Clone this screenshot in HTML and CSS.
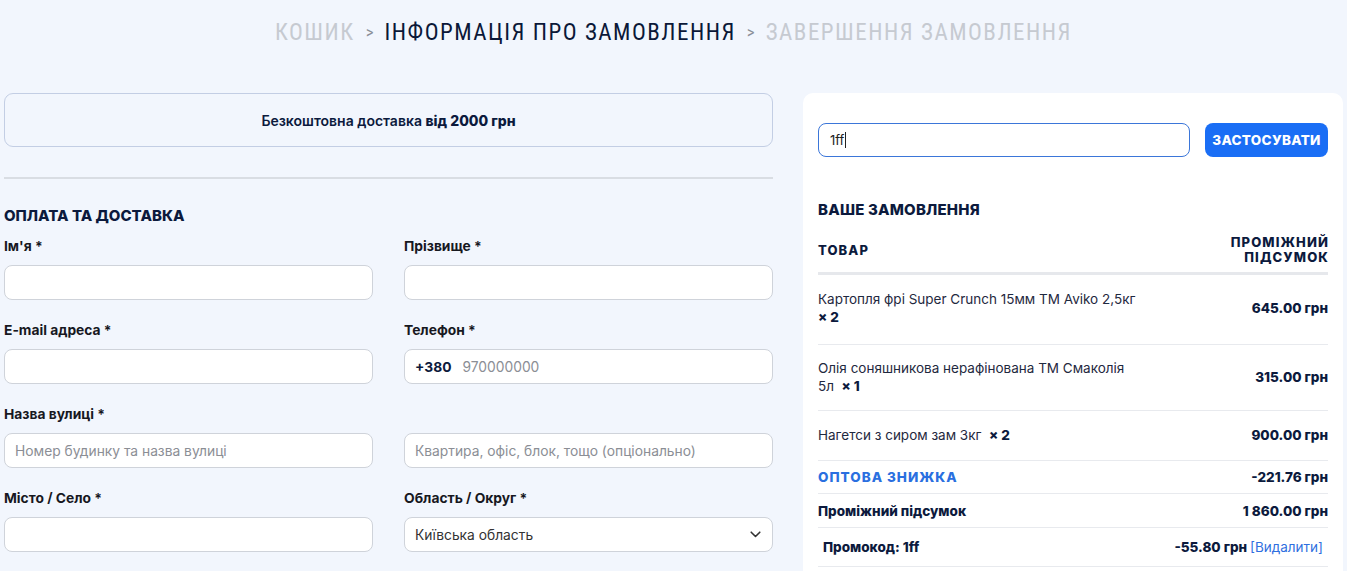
FILE: index.html
```html
<!DOCTYPE html>
<html lang="uk">
<head>
<meta charset="utf-8">
<title>Інформація про замовлення</title>
<link rel="stylesheet" href="styles.css">
</head>
<body>
<div class="page">
  <nav class="crumbs">
    <span class="crumb muted">КОШИК</span>
    <span class="sep">&gt;</span>
    <span class="crumb active">ІНФОРМАЦІЯ ПРО ЗАМОВЛЕННЯ</span>
    <span class="sep">&gt;</span>
    <span class="crumb muted">ЗАВЕРШЕННЯ ЗАМОВЛЕННЯ</span>
  </nav>
  <div class="layout">
    <section class="left">
      <div class="free"><span>Безкоштовна доставка <b>від 2000 грн</b></span></div>
      <hr class="divider">
      <h2 class="title">ОПЛАТА ТА ДОСТАВКА</h2>
      <div class="form">
        <div class="field">
          <label class="label">Ім'я *</label>
          <div class="input"></div>
        </div>
        <div class="field">
          <label class="label">Прізвище *</label>
          <div class="input"></div>
        </div>
        <div class="field">
          <label class="label">E-mail адреса *</label>
          <div class="input"></div>
        </div>
        <div class="field">
          <label class="label">Телефон *</label>
          <div class="input"><span class="code">+380</span><span class="ph">970000000</span></div>
        </div>
        <div class="field">
          <label class="label">Назва вулиці *</label>
          <div class="input"><span class="ph">Номер будинку та назва вулиці</span></div>
        </div>
        <div class="field">
          <label class="label">&nbsp;</label>
          <div class="input"><span class="ph">Квартира, офіс, блок, тощо (опціонально)</span></div>
        </div>
        <div class="field">
          <label class="label">Місто / Село *</label>
          <div class="input"></div>
        </div>
        <div class="field">
          <label class="label">Область / Округ *</label>
          <div class="input select"><span class="val">Київська область</span>
            <svg class="chev" width="11" height="7" viewBox="0 0 11 7"><path d="M1.2 1.2 L5.5 5.5 L9.8 1.2" fill="none" stroke="#333" stroke-width="1.6" stroke-linecap="round" stroke-linejoin="round"/></svg>
          </div>
        </div>
      </div>
    </section>
    <aside class="panel">
      <div class="coupon">
        <div class="cinput">1ff<span class="caret"></span></div>
        <button class="apply">ЗАСТОСУВАТИ</button>
      </div>
      <h3 class="otitle">ВАШЕ ЗАМОВЛЕННЯ</h3>
      <div class="thead">
        <span>ТОВАР</span>
        <span class="right">ПРОМІЖНИЙ<br>ПІДСУМОК</span>
      </div>
      <div class="item first">
        <div class="name">Картопля фрі Super Crunch 15мм ТМ Aviko 2,5кг <b class="qty">×&nbsp;2</b></div>
        <div class="price">645.00 грн</div>
      </div>
      <div class="item second">
        <div class="name">Олія соняшникова нерафінована ТМ Смаколія 5л&nbsp; <b class="qty">×&nbsp;1</b></div>
        <div class="price">315.00 грн</div>
      </div>
      <div class="item">
        <div class="name">Нагетси з сиром зам 3кг&nbsp; <b class="qty">×&nbsp;2</b></div>
        <div class="price">900.00 грн</div>
      </div>
      <div class="total disc">
        <span class="blue">ОПТОВА ЗНИЖКА</span>
        <span class="price">-221.76 грн</span>
      </div>
      <div class="total">
        <span class="strong">Проміжний підсумок</span>
        <span class="price">1&nbsp;860.00 грн</span>
      </div>
      <div class="total promo">
        <span class="strong">Промокод: 1ff</span>
        <span class="price">-55.80 грн <a class="del">[Видалити]</a></span>
      </div>
    </aside>
  </div>
</div>
</body>
</html>
```
FILE: styles.css
```css
* { box-sizing: border-box; }
html, body { margin: 0; padding: 0; }
body {
  background: #f2f6fd;
  font-family: "Inter", "Roboto", sans-serif;
  color: #0c1a3d;
  overflow: hidden;
}
.page { padding: 0 4px; }

.crumbs {
  height: 64px;
  display: flex;
  justify-content: center;
  align-items: center;
  gap: 10px;
  font-family: "Roboto Condensed", "DejaVu Sans Condensed", "Liberation Sans Narrow", "Roboto", sans-serif;
  font-size: 23px;
  letter-spacing: 1.5px;
}
.crumb.muted { color: #c6cad1; }
.crumb.active { color: #0b1838; }
.sep { color: #8a8f98; font-size: 17px; letter-spacing: 0; padding: 0 1px; }

.layout {
  display: grid;
  grid-template-columns: 769px 540px;
  gap: 30px;
  margin-top: 29px;
  align-items: start;
}

.free {
  height: 54px;
  border: 1px solid #c3cee4;
  border-radius: 9px;
  display: flex;
  align-items: center;
  justify-content: center;
  font-size: 14px;
  font-weight: 600;
  color: #0c1a3d;
}
.free b { font-weight: 800; }

.divider {
  border: 0;
  height: 2px;
  background: #d9dde3;
  margin: 30px 0 0;
}

.title {
  margin: 27px 0 0;
  font-size: 15px;
  line-height: 20px;
  font-weight: 800;
  color: #0c1a3d;
}

.form {
  display: grid;
  grid-template-columns: 369px 369px;
  column-gap: 31px;
  row-gap: 21px;
  margin-top: 11px;
}
.field { display: flex; flex-direction: column; gap: 10px; }
.label {
  font-size: 13.8px;
  line-height: 18px;
  font-weight: 700;
  color: #17181f;
}
.input {
  height: 35px;
  background: #fff;
  border: 1px solid #cfd3da;
  border-radius: 8px;
  display: flex;
  align-items: center;
  padding: 0 10px;
  font-size: 13.8px;
}
.ph { color: #8b8e95; }
.code { font-weight: 700; color: #0c1a3d; margin-right: 11px; }
.select { justify-content: space-between; padding-right: 11px; }
.select .val { color: #333; }

.panel {
  background: #fff;
  border-radius: 10px;
  padding: 30px 15px 20px;
}
.coupon { display: flex; gap: 15px; }
.cinput {
  flex: 1;
  height: 34px;
  border: 1px solid #3b76d9;
  border-radius: 8px;
  display: flex;
  align-items: center;
  padding: 0 11px;
  font-size: 13px;
  color: #222;
}
.caret { display: inline-block; width: 1px; height: 16px; background: #222; margin-left: 1px; }
.apply {
  width: 123px;
  height: 34px;
  border: 0;
  border-radius: 8px;
  background: #1a6ef5;
  color: #fff;
  font-family: inherit;
  font-weight: 800;
  font-size: 13.5px;
  letter-spacing: 0.3px;
  padding: 0;
}

.otitle {
  margin: 44px 0 0;
  font-size: 15px;
  line-height: 18px;
  font-weight: 800;
  letter-spacing: 0.2px;
}
.thead {
  display: flex;
  justify-content: space-between;
  align-items: center;
  font-size: 13px;
  font-weight: 800;
  line-height: 15px;
  letter-spacing: 1.1px;
  padding: 16px 0 7px;
  border-bottom: 3px solid #e6e8ec;
}
.thead .right { text-align: right; margin-right: -1px; }

.item {
  display: flex;
  justify-content: space-between;
  align-items: center;
  padding: 15px 0 16px;
  border-bottom: 1px solid #e8eaee;
  font-size: 13.5px;
  line-height: 18px;
}
.item.first { padding: 15px 0 18px; }
.item.second { padding: 14px 0 15px; }
.item .name { width: 322px; color: #1f2940; }
.item .qty { font-weight: 800; color: #0c1a3d; }
.price { font-weight: 800; font-size: 13.5px; color: #0c1a3d; }

.total {
  display: flex;
  justify-content: space-between;
  align-items: center;
  height: 34px;
  border-bottom: 1px solid #e8eaee;
  font-size: 13.5px;
}
.total.disc { height: 33px; }
.blue { color: #2a6fe0; font-weight: 800; letter-spacing: 1px; }
.strong { font-weight: 800; }
.promo { height: 39px; padding: 0 5px; }
.del { color: #2f6fe0; font-weight: 400; }
```
